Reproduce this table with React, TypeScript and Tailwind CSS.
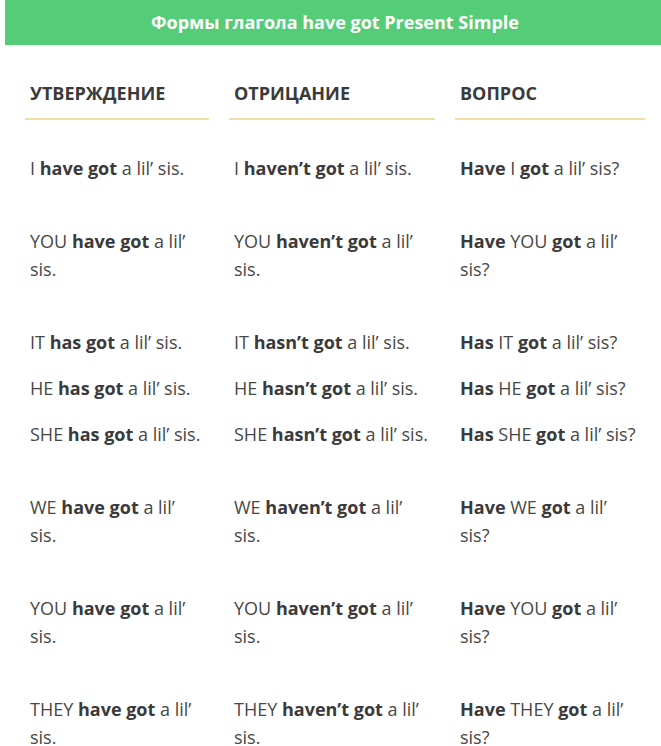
import React from 'react'

type Cell = React.ReactNode[]

const B = ({ children }: { children: React.ReactNode }) => <strong className="font-bold text-[#3a3a3a]">{children}</strong>

// each row: [affirmative, negative, question]; a row can hold several short lines
const ROWS: Cell[][] = [
  [
    [<>I <B>have got</B> a lil’ sis.</>],
    [<>I <B>haven’t got</B> a lil’ sis.</>],
    [<><B>Have</B> I <B>got</B> a lil’ sis?</>],
  ],
  [
    [<>YOU <B>have got</B> a lil’ sis.</>],
    [<>YOU <B>haven’t got</B> a lil’ sis.</>],
    [<><B>Have</B> YOU <B>got</B> a lil’ sis?</>],
  ],
  [
    [<>IT <B>has got</B> a lil’ sis.</>, <>HE <B>has got</B> a lil’ sis.</>, <>SHE <B>has got</B> a lil’ sis.</>],
    [<>IT <B>hasn’t got</B> a lil’ sis.</>, <>HE <B>hasn’t got</B> a lil’ sis.</>, <>SHE <B>hasn’t got</B> a lil’ sis.</>],
    [<><B>Has</B> IT <B>got</B> a lil’ sis?</>, <><B>Has</B> HE <B>got</B> a lil’ sis?</>, <><B>Has</B> SHE <B>got</B> a lil’ sis?</>],
  ],
  [
    [<>WE <B>have got</B> a lil’ sis.</>],
    [<>WE <B>haven’t got</B> a lil’ sis.</>],
    [<><B>Have</B> WE <B>got</B> a lil’ sis?</>],
  ],
  [
    [<>YOU <B>have got</B> a lil’ sis.</>],
    [<>YOU <B>haven’t got</B> a lil’ sis.</>],
    [<><B>Have</B> YOU <B>got</B> a lil’ sis?</>],
  ],
  [
    [<>THEY <B>have got</B> a lil’ sis.</>],
    [<>THEY <B>haven’t got</B> a lil’ sis.</>],
    [<><B>Have</B> THEY <B>got</B> a lil’ sis?</>],
  ],
]

const HEADERS = ['Утверждение', 'Отрицание', 'Вопрос']

export default function App() {
  return (
    <div className="w-[661px] h-[746px] overflow-hidden bg-white font-['Open_Sans',sans-serif] text-[#474747]">
      {/* Title bar */}
      <div className="ml-[5px] w-[660px] h-[45px] bg-[#55cc77] flex items-center justify-center">
        <h1 className="text-[18px] font-bold text-white">Формы глагола have got Present Simple</h1>
      </div>

      {/* Table head */}
      <div className="ml-[25px] mt-[34px] grid grid-cols-[184px_206px_190px] gap-x-5">
        {HEADERS.map(h => (
          <div key={h} className="border-b-2 border-[#eee0a4] px-[5px] pb-[11px]">
            <span className="text-[18px] leading-[28px] font-bold uppercase text-[#3a3a3a]">{h}</span>
          </div>
        ))}
      </div>

      {/* Table body */}
      <div className="ml-[25px] mt-[34px] flex flex-col gap-[45px]">
        {ROWS.map((row, i) => (
          <div key={i} className="grid grid-cols-[184px_206px_190px] gap-x-5">
            {row.map((cell, j) => (
              <div key={j} className="px-[5px] flex flex-col gap-[18px]">
                {cell.map((line, k) => (
                  <p key={k} className="text-[18px] leading-[28px]">{line}</p>
                ))}
              </div>
            ))}
          </div>
        ))}
      </div>
    </div>
  )
}
